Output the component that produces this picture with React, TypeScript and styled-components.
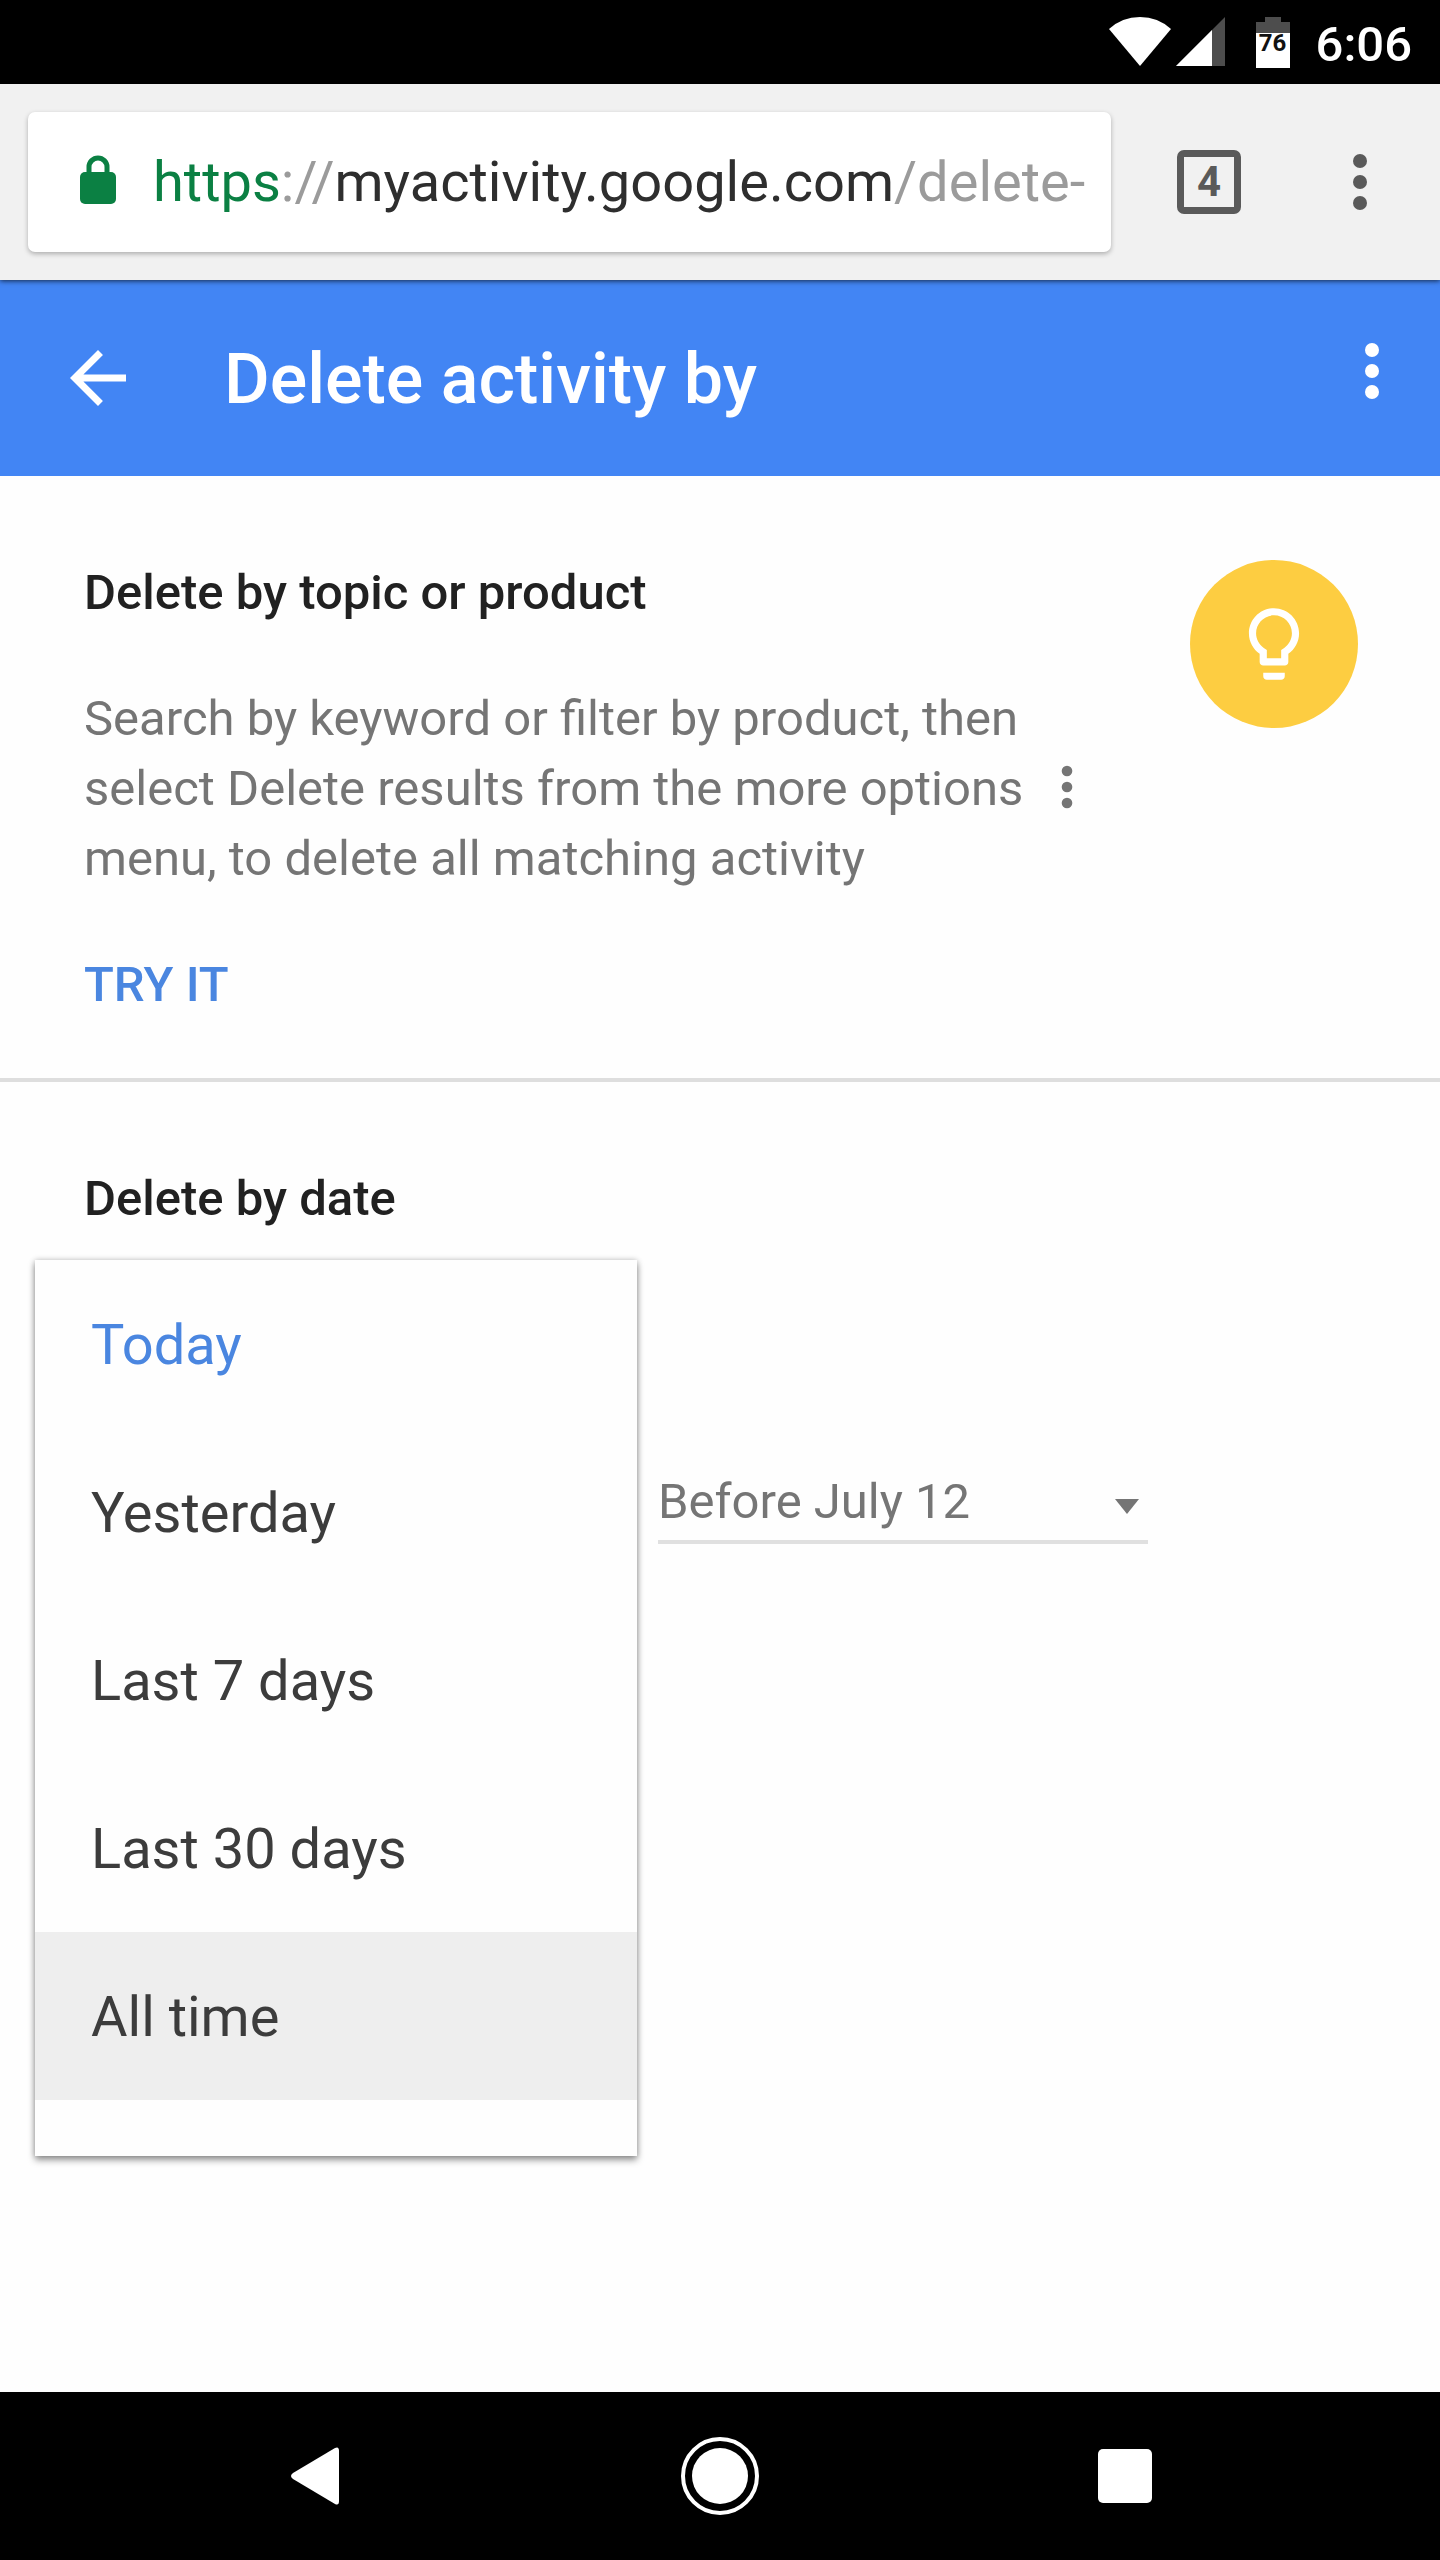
import React, { useState } from "react";
import styled, { createGlobalStyle } from "styled-components";

const GlobalStyle = createGlobalStyle`
  *, *::before, *::after { box-sizing: border-box; }
  body {
    margin: 0;
    background: #fefefe;
    font-family: Roboto, "Liberation Sans", sans-serif;
  }
  button, select { font-family: inherit; }
`;

const Screen = styled.div`
  display: flex;
  flex-direction: column;
  min-height: 100vh;
`;

/* ---------- Android status bar ---------- */

const StatusBar = styled.div`
  display: flex;
  justify-content: flex-end;
  align-items: center;
  height: 84px;
  padding: 0 28px;
  background: #000;
  color: #fff;
`;

const StatusIcon = styled.svg`
  display: block;
  height: 52px;
  margin-right: 4px;
`;

const Battery = styled.div`
  display: flex;
  flex-direction: column;
  align-items: center;
  width: 34px;
  margin: 0 26px;
`;

const BatteryCap = styled.div`
  width: 16px;
  height: 5px;
  background: #4d4d4d;
`;

const BatteryBody = styled.div`
  width: 100%;
  height: 46px;
  border-top: 11px solid #4d4d4d;
  background: #fff;
  color: #111;
  font-size: 24px;
  font-weight: 700;
  line-height: 20px;
  text-align: center;
`;

const Clock = styled.time`
  font-size: 49px;
  font-weight: 500;
  line-height: 60px;
  padding-top: 6px;
`;

/* ---------- Browser toolbar ---------- */

const Toolbar = styled.header`
  position: relative;
  display: flex;
  align-items: center;
  height: 196px;
  padding: 0 28px;
  background: #f1f1f1;
  box-shadow: 0 1px 5px rgba(0, 0, 0, 0.7);
`;

const AddressBar = styled.div`
  display: flex;
  flex: 1;
  align-items: center;
  gap: 33px;
  min-width: 0;
  height: 140px;
  padding: 0 24px 0 48px;
  border-radius: 7px;
  background: #fff;
  box-shadow: 0 2px 5px rgba(0, 0, 0, 0.28);
`;

const LockIcon = styled.svg`
  flex: none;
  width: 44px;
  height: 50px;
  margin-bottom: 4px;
`;

const Url = styled.div`
  overflow: hidden;
  color: #9b9b9b;
  font-size: 56px;
  line-height: 72px;
  white-space: nowrap;
`;

const UrlPart = styled.span<{ $secure?: boolean }>`
  color: ${(p) => (p.$secure ? "#0b8043" : "#2e2e2e")};
`;

const IconButton = styled.button<{ $width?: number; $color?: string; $raised?: boolean }>`
  display: flex;
  flex: none;
  align-items: center;
  justify-content: center;
  width: ${(p) => p.$width ?? 84}px;
  height: 140px;
  padding: ${(p) => (p.$raised ? "0 0 14px" : "0")};
  border: 0;
  background: none;
  color: ${(p) => p.$color ?? "#5a5a5a"};
  cursor: pointer;
`;

const TabCount = styled.span`
  display: flex;
  align-items: center;
  justify-content: center;
  width: 64px;
  height: 64px;
  border: 7px solid #5a5a5a;
  border-radius: 7px;
  font-size: 42px;
  font-weight: 700;
  line-height: 48px;
`;

/* ---------- Page app bar ---------- */

const AppBar = styled.div`
  display: flex;
  align-items: center;
  height: 196px;
  padding: 0 26px 0 56px;
  background: #4285f4;
`;

const Title = styled.h1`
  flex: 1;
  margin: 0 0 0 84px;
  padding-top: 2px;
  color: #fff;
  font-size: 70px;
  font-weight: 500;
  line-height: 84px;
`;

/* ---------- Content ---------- */

const Main = styled.main`
  flex: 1;
`;

const Section = styled.section<{ $divided?: boolean }>`
  padding: 84px 82px 58px 84px;
  ${(p) => p.$divided && "border-bottom: 4px solid #dedede;"}
`;

const TopicLayout = styled.div`
  display: flex;
  align-items: flex-start;
  gap: 84px;
`;

const TopicText = styled.div`
  flex: 1;
`;

const Heading = styled.h2`
  margin: 0;
  color: #212121;
  font-size: 49px;
  font-weight: 500;
  line-height: 66px;
`;

const Paragraph = styled.p`
  margin: 58px 0 56px;
  color: #757575;
  font-size: 49px;
  line-height: 70px;
`;

const TryLink = styled.a`
  display: inline-block;
  color: #4a86e0;
  font-size: 49px;
  font-weight: 500;
  line-height: 70px;
  text-decoration: none;
`;

const Badge = styled.div`
  display: flex;
  flex: none;
  align-items: center;
  justify-content: center;
  width: 168px;
  height: 168px;
  border-radius: 50%;
  background: #fdcd41;
`;

const InlineIcon = styled.span`
  display: inline-flex;
  height: 64px;
  vertical-align: -14px;
`;

const DateRow = styled.div`
  display: flex;
  gap: 84px;
  padding-top: 228px;
`;

const Field = styled.div`
  position: relative;
  width: 490px;
  height: 84px;
`;

const DateSelect = styled.select`
  width: 100%;
  height: 84px;
  padding: 4px 56px 0 0;
  border: 0;
  border-bottom: 4px solid #e0e0e0;
  border-radius: 0;
  background: none;
  color: #757575;
  font-size: 49px;
  line-height: 70px;
  appearance: none;
`;

const Caret = styled.span`
  position: absolute;
  top: 39px;
  right: 9px;
  border: 12px solid transparent;
  border-top: 15px solid #757575;
  border-bottom: 0;
  pointer-events: none;
`;

const Menu = styled.ul`
  position: absolute;
  bottom: -612px;
  left: -49px;
  width: 602px;
  margin: 0;
  padding: 0 0 56px;
  background: #fefefe;
  box-shadow: 0 4px 7px rgba(0, 0, 0, 0.4), 0 0 6px rgba(0, 0, 0, 0.2);
  list-style: none;
`;

const MenuItem = styled.button<{ $selected: boolean; $active: boolean }>`
  display: block;
  width: 100%;
  height: 168px;
  padding: 2px 56px 0;
  border: 0;
  background: ${(p) => (p.$active ? "#eee" : "none")};
  color: ${(p) => (p.$selected ? "#4a86e0" : "#3c3c3c")};
  font-size: 56px;
  text-align: left;
  cursor: pointer;
`;

/* ---------- Android navigation bar ---------- */

const NavBar = styled.nav`
  display: grid;
  grid-template-columns: repeat(3, 1fr);
  justify-items: center;
  align-items: center;
  height: 168px;
  padding: 0 112px;
  background: #000;
`;

const MoreIcon = ({ size }: { size: number }) => (
  <svg width={size} height={size} viewBox="0 0 24 24" fill="currentColor" aria-hidden="true">
    <circle cx="12" cy="6" r="2" />
    <circle cx="12" cy="12" r="2" />
    <circle cx="12" cy="18" r="2" />
  </svg>
);

const RANGES = ["Today", "Yesterday", "Last 7 days", "Last 30 days", "All time"];

export default function App() {
  const [active, setActive] = useState("All time");

  return (
    <>
      <GlobalStyle />
      <Screen>
        <StatusBar>
          <StatusIcon width="64" viewBox="0 0 64 52" aria-label="Wi-Fi">
            <path d="M1 13Q14 1 32 1T63 13L32 50Z" fill="#fff" />
          </StatusIcon>
          <StatusIcon width="50" viewBox="0 0 50 52" aria-label="Signal">
            <path d="M0 50L49 1V50Z" fill="#4d4d4d" />
            <path d="M0 50L36 14V50Z" fill="#fff" />
          </StatusIcon>
          <Battery>
            <BatteryCap />
            <BatteryBody>76</BatteryBody>
          </Battery>
          <Clock>6:06</Clock>
        </StatusBar>

        <Toolbar>
          <AddressBar>
            <LockIcon viewBox="0 0 44 50" aria-label="Secure">
              <path
                d="M13 20V12a9 9 0 0 1 18 0V20"
                fill="none"
                stroke="#0b8043"
                strokeWidth="5"
              />
              <rect x="4" y="17" width="36" height="32" rx="5" fill="#0b8043" />
            </LockIcon>
            <Url role="textbox" aria-label="Address" tabIndex={0}>
              <UrlPart $secure>https</UrlPart>://<UrlPart>myactivity.google.com</UrlPart>/delete-
            </Url>
          </AddressBar>
          <IconButton $width={196} aria-label="Open tabs">
            <TabCount>4</TabCount>
          </IconButton>
          <IconButton $width={105} aria-label="Browser menu">
            <MoreIcon size={84} />
          </IconButton>
        </Toolbar>

        <AppBar>
          <IconButton $color="#fff" aria-label="Back">
            <svg width="84" height="84" viewBox="0 0 24 24" fill="currentColor" aria-hidden="true">
              <path d="M20 11H7.830l5.590-5.590L12 4l-8 8 8 8 1.410-1.410L7.830 13H20v-2z" />
            </svg>
          </IconButton>
          <Title>Delete activity by</Title>
          <IconButton $color="#fff" $raised aria-label="More options">
            <MoreIcon size={84} />
          </IconButton>
        </AppBar>

        <Main>
          <Section $divided>
            <TopicLayout>
              <TopicText>
                <Heading>Delete by topic or product</Heading>
                <Paragraph>
                  Search by keyword or filter by product, then select Delete results from the more
                  options{" "}
                  <InlineIcon>
                    <MoreIcon size={64} />
                  </InlineIcon>{" "}
                  menu, to delete all matching activity
                </Paragraph>
                <TryLink href="#search">TRY IT</TryLink>
              </TopicText>
              <Badge>
                <svg width="86" height="86" viewBox="0 0 24 24" fill="#fff" aria-hidden="true">
                  <path d="M9 21c0 .55.45 1 1 1h4c.55 0 1-.45 1-1v-1H9v1zm3-19C8.140 2 5 5.140 5 9c0 2.380 1.190 4.470 3 5.740V17c0 .55.45 1 1 1h6c.55 0 1-.45 1-1v-2.260c1.810-1.270 3-3.360 3-5.740 0-3.860-3.140-7-7-7zm2.850 11.100l-.85.6V16h-4v-2.300l-.85-.6C7.800 12.160 7 10.630 7 9c0-2.760 2.240-5 5-5s5 2.240 5 5c0 1.630-.8 3.160-2.150 4.100z" />
                </svg>
              </Badge>
            </TopicLayout>
          </Section>

          <Section>
            <Heading>Delete by date</Heading>
            <DateRow>
              <Field>
                <Menu aria-label="Date range">
                  {RANGES.map((range) => (
                    <li key={range}>
                      <MenuItem
                        $selected={range === "Today"}
                        $active={range === active}
                        onClick={() => setActive(range)}
                      >
                        {range}
                      </MenuItem>
                    </li>
                  ))}
                </Menu>
              </Field>
              <Field>
                <DateSelect aria-label="End date" defaultValue="july12">
                  <option value="july12">Before July 12</option>
                </DateSelect>
                <Caret />
              </Field>
            </DateRow>
          </Section>
        </Main>

        <NavBar aria-label="System navigation">
          <IconButton $color="#fff" aria-label="System back">
            <svg width="50" height="60" viewBox="0 0 50 60" aria-hidden="true">
              <path
                d="M3 27L45 2Q49 0 49 5V55Q49 60 45 58L3 33Q-1 30 3 27Z"
                fill="currentColor"
              />
            </svg>
          </IconButton>
          <IconButton $color="#fff" aria-label="Home">
            <svg width="80" height="80" viewBox="0 0 80 80" aria-hidden="true">
              <circle cx="40" cy="40" r="37" fill="none" stroke="currentColor" strokeWidth="4" />
              <circle cx="40" cy="40" r="28" fill="currentColor" />
            </svg>
          </IconButton>
          <IconButton $color="#fff" aria-label="Recent apps">
            <svg width="54" height="54" viewBox="0 0 54 54" aria-hidden="true">
              <rect width="54" height="54" rx="5" fill="currentColor" />
            </svg>
          </IconButton>
        </NavBar>
      </Screen>
    </>
  );
}
